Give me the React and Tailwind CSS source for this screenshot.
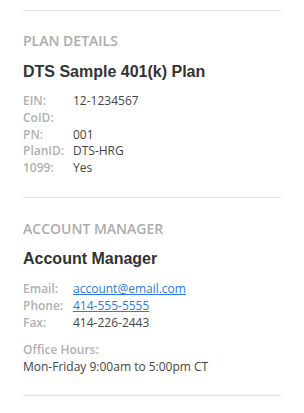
const PLAN = [
  ["EIN:", "12-1234567"],
  ["CoID:", ""],
  ["PN:", "001"],
  ["PlanID:", "DTS-HRG"],
  ["1099:", "Yes"],
];

const Label = ({ children }) => (
  <span className="w-[50px] shrink-0 font-semibold text-[#b0b0b0]">{children}</span>
);

const App = () => {
  return (
    <div
      className="w-[304px] h-[413px] bg-white pt-[10px] px-[23px]"
      style={{ fontFamily: '"Open Sans", sans-serif' }}
    >
      {/* Plan details */}
      <div className="border-t border-[#e0e0e0] pt-[21px] pb-[20px]">
        <h3 className="text-[14px] leading-[18px] font-semibold text-[#acacac] uppercase">
          Plan Details
        </h3>
        <h2 className="mt-[12px] text-[16px] leading-[20px] font-bold text-[#333] font-['Liberation_Sans',Arial,sans-serif]">
          DTS Sample 401(k) Plan
        </h2>
        <div className="mt-[11px] text-[12px] leading-[16.75px] text-[#444]">
          {PLAN.map(([k, v]) => (
            <div key={k} className="flex h-[16.75px]">
              <Label>{k}</Label>
              <span>{v}</span>
            </div>
          ))}
        </div>
      </div>

      {/* Account manager */}
      <div className="border-t border-[#e0e0e0] pt-[22px] pb-[20px]">
        <h3 className="text-[14px] leading-[18px] font-semibold text-[#acacac] uppercase">
          Account Manager
        </h3>
        <h2 className="mt-[11px] text-[16px] leading-[20px] font-bold text-[#333] font-['Liberation_Sans',Arial,sans-serif]">
          Account Manager
        </h2>
        <div className="mt-[11px] text-[12px] leading-[17px] text-[#444]">
          <div className="flex">
            <Label>Email:</Label>
            <a href="#" className="text-[#2a7ae2] underline">account@email.com</a>
          </div>
          <div className="flex">
            <Label>Phone:</Label>
            <a href="#" className="text-[#2a7ae2] underline">414-555-5555</a>
          </div>
          <div className="flex">
            <Label>Fax:</Label>
            <span>414-226-2443</span>
          </div>
        </div>
        <div className="mt-[10px] text-[12px] leading-[17px]">
          <div className="font-semibold text-[#b0b0b0]">Office Hours:</div>
          <div className="text-[#444]">Mon-Friday 9:00am to 5:00pm CT</div>
        </div>
      </div>
      <div className="border-t border-[#e0e0e0]" />
    </div>
  );
};

export default App;
